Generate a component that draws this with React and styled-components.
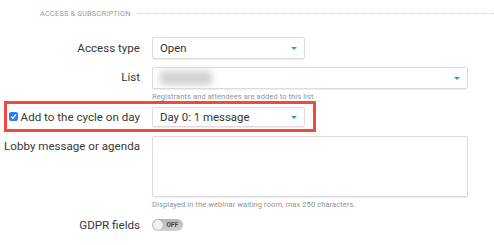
import styled, { createGlobalStyle } from 'styled-components'

const Global = createGlobalStyle`
    body {
        margin: 0;
        background: #fff;
        font-family: Roboto, 'Liberation Sans', sans-serif;
        color: #333;
    }
`

const Page = styled.div`
    width: 494px;
    height: 245px;
    overflow: hidden;
    padding-top: 9px;
    box-sizing: border-box;
`

const SectionHead = styled.div`
    display: flex;
    align-items: center;
    gap: 6px;
    padding-left: 40px;
    font-size: 7.4px;
    letter-spacing: 0.2px;
    color: #9a9a9a;
    text-transform: uppercase;
    &::after {
        content: '';
        flex: 1;
        border-top: 1px dotted #cfcfcf;
    }
`

const Row = styled.div`
    display: flex;
    align-items: ${({top}) => top ? 'flex-start' : 'center'};
    margin-top: ${({mt}) => mt || 0}px;
`

const Label = styled.div`
    width: ${({w}) => w || 140}px;
    text-align: right;
    white-space: nowrap;
    font-size: 11.6px;
    color: #383838;
    flex-shrink: 0;
    padding-top: ${({pt}) => pt || 0}px;
`

const Field = styled.div`
    margin-left: 12px;
    display: flex;
    flex-direction: column;
`

const Select = styled.div`
    position: relative;
    box-sizing: border-box;
    width: ${({w}) => w}px;
    height: ${({h}) => h || 22}px;
    border: 1px solid #dcdcdc;
    border-radius: 2px;
    box-shadow: 0 1px 1px rgba(0,0,0,0.07);
    display: flex;
    align-items: center;
    padding-left: 7px;
    font-size: 11.4px;
    white-space: nowrap;
    color: #333;
    &::after {
        content: '';
        position: absolute;
        right: 7px;
        top: 50%;
        margin-top: -1px;
        border-left: 3px solid transparent;
        border-right: 3px solid transparent;
        border-top: 3px solid #1ea0e6;
    }
`

const Blur = styled.div`
    width: 52px;
    height: 14px;
    background: #d2d2d2;
    filter: blur(3px);
`

const Help = styled.div`
    font-size: 7.5px;
    line-height: 9px;
    color: #939393;
    margin-top: 3px;
    letter-spacing: 0.1px;
    white-space: nowrap;
`

const Highlight = styled.div`
    box-sizing: border-box;
    margin: 0 0 0 4px;
    width: 312px;
    height: 31px;
    border: 3px solid #f0493e;
    display: flex;
    align-items: center;
`

const CheckLabel = styled.label`
    width: 133px;
    display: flex;
    align-items: center;
    justify-content: flex-end;
    gap: 3px;
    white-space: nowrap;
    font-size: 11.6px;
    color: #383838;
`

const Check = styled.span`
    width: 9px;
    height: 9px;
    border-radius: 2px;
    background: #2f7cf6;
    display: flex;
    align-items: center;
    justify-content: center;
`

const TextArea = styled.div`
    box-sizing: border-box;
    width: 316px;
    height: 61px;
    border: 1px solid #dcdcdc;
    border-radius: 2px;
    box-shadow: 0 1px 1px rgba(0,0,0,0.07);
`

const Toggle = styled.div`
    position: relative;
    width: 31px;
    height: 12px;
    border-radius: 6px;
    background: linear-gradient(#b8b8b8, #d0d0d0);
    font-size: 6.5px;
    font-weight: 700;
    color: #444;
    display: flex;
    align-items: center;
    justify-content: flex-end;
    padding-right: 5px;
    box-sizing: border-box;
    &::before {
        content: '';
        position: absolute;
        left: 1px;
        top: 1px;
        width: 10px;
        height: 10px;
        border-radius: 50%;
        background: #f2f2f2;
        box-shadow: 0 0 1px rgba(0,0,0,0.3);
    }
`

export default function App() {
    return (
        <Page>
            <Global />
            <SectionHead>Access &amp; Subscription</SectionHead>

            <Row mt={19}>
                <Label>Access type</Label>
                <Field><Select w={153}>Open</Select></Field>
            </Row>

            <Row mt={8} top>
                <Label pt={3}>List</Label>
                <Field>
                    <Select w={316}><Blur /></Select>
                    <Help>Registrants and attendees are added to this list</Help>
                </Field>
            </Row>

            <Highlight>
                <CheckLabel>
                    <Check>
                        <svg width="7" height="7" viewBox="0 0 8 8">
                            <path d="M1.3 4.2 L3.2 6 L6.8 1.8" fill="none" stroke="#fff" strokeWidth="1.4" />
                        </svg>
                    </Check>
                    Add to the cycle on day
                </CheckLabel>
                <Field><Select w={153} h={20}>Day 0: 1 message</Select></Field>
            </Highlight>

            <Row mt={4} top>
                <Label pt={3}>Lobby message or agenda</Label>
                <Field>
                    <TextArea />
                    <Help>Displayed in the webinar waiting room, max 250 characters.</Help>
                </Field>
            </Row>

            <Row mt={9}>
                <Label>GDPR fields</Label>
                <Field><Toggle>OFF</Toggle></Field>
            </Row>
        </Page>
    )
}
